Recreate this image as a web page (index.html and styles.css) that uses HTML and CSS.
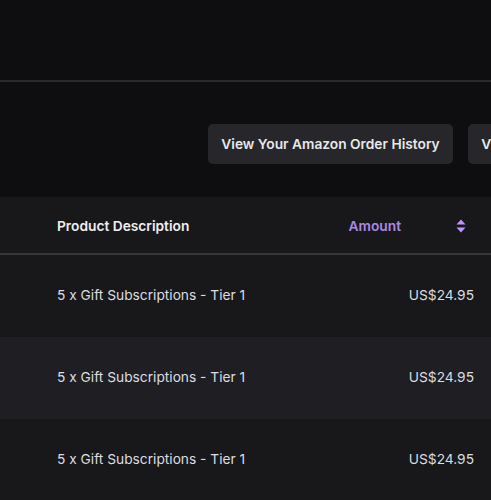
FILE: index.html
```html
<!DOCTYPE html>
<html>
<head>
<meta charset="utf-8">
<link rel="stylesheet" href="styles.css">
</head>
<body>
<div class="page">
  <div class="top"></div>
  <div class="divider"></div>
  <div class="actions">
    <button class="btn">View Your Amazon Order History</button>
    <button class="btn">View Your Amazon Order History</button>
  </div>
  <div class="table">
    <div class="row head">
      <div class="desc">Product Description</div>
      <div class="amount sort">Amount</div>
      <div class="sorticon">
        <svg width="12" height="18" viewBox="0 0 12 18"><path d="M1.5 7.5 L6 2.5 L10.5 7.5 Z M1.5 10.5 L6 15.5 L10.5 10.5 Z" fill="#bf94ff"/></svg>
      </div>
    </div>
    <div class="row">
      <div class="desc">5 x Gift Subscriptions - Tier 1</div>
      <div class="amount">US$24.95</div>
    </div>
    <div class="row alt">
      <div class="desc">5 x Gift Subscriptions - Tier 1</div>
      <div class="amount">US$24.95</div>
    </div>
    <div class="row">
      <div class="desc">5 x Gift Subscriptions - Tier 1</div>
      <div class="amount">US$24.95</div>
    </div>
  </div>
</div>
</body>
</html>
```
FILE: styles.css
```css
html, body {
  margin: 0;
  padding: 0;
  background: #0e0e10;
  font-family: Inter, "Noto Sans", sans-serif;
  overflow: hidden;
}
.page {
  width: 491px;
  height: 500px;
  overflow: hidden;
}
.top {
  height: 80px;
}
.divider {
  height: 2px;
  background: #2a2a2f;
}
.actions {
  display: flex;
  gap: 15px;
  padding: 42px 0 0 208px;
  box-sizing: border-box;
  height: 115px;
  white-space: nowrap;
}
.btn {
  flex: none;
  height: 40px;
  width: 245px;
  padding: 0;
  border: none;
  border-radius: 5px;
  background: #26262b;
  color: #e8e8ea;
  font-family: inherit;
  font-size: 13.75px;
  font-weight: 600;
}
.table {
  background: #18181b;
}
.row {
  display: flex;
  align-items: center;
  height: 82px;
  box-sizing: border-box;
  padding: 0 0 3px 57px;
  color: #dcdce0;
  font-size: 13.75px;
}
.row.alt {
  background: #1f1f23;
}
.row.head {
  height: 58px;
  padding: 2px 0 0 57px;
  border-bottom: 2px solid #35353b;
  font-weight: 600;
  color: #efeff1;
}
.desc {
  flex: 1;
}
.amount {
  width: 140px;
  text-align: right;
  padding-right: 17px;
}
.amount.sort {
  width: auto;
  padding-right: 0;
  color: #a98ae6;
  text-align: left;
}
.sorticon {
  width: 90px;
  display: flex;
  justify-content: flex-end;
  padding-right: 24px;
  box-sizing: border-box;
}
.sorticon svg {
  display: block;
}
```
